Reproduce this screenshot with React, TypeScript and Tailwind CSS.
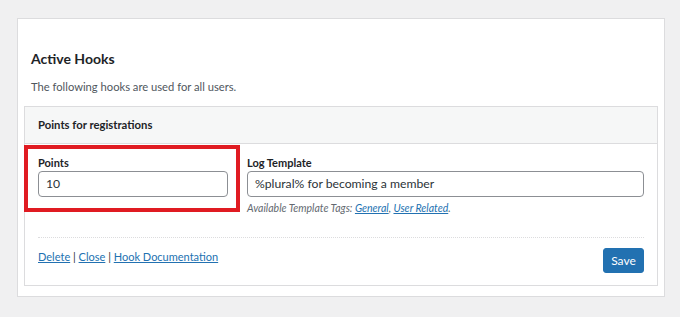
export default function App() {
  return (
    <div className="w-[680px] h-[317px] bg-[#f0f0f1] pt-[18px] pl-[17px] font-['Lato',sans-serif]">
      <div className="w-[648px] h-[279px] bg-white border border-[#dcdcde] pl-[6px] pr-[6px] pt-[28px]">
        <h2 className="ml-[7px] text-[14px] font-bold text-[#1d2327] leading-[24px]">Active Hooks</h2>
        <p className="ml-[7px] mt-[6px] text-[11.2px] text-[#50575e] leading-[20px]">The following hooks are used for all users.</p>
        <div className="mt-[9px] border border-[#dcdcde]">
          <div className="h-[37px] bg-[#f6f7f7] border-b border-[#dcdcde] pl-[13px] flex items-center">
            <span className="text-[11.3px] font-bold text-[#1d2327]">Points for registrations</span>
          </div>
          <div className="px-[13px] pt-[10px] pb-[12px]">
            <div className="relative flex gap-[19px]">
              <div className="w-[190px]">
                <label className="block text-[11px] font-bold text-[#1d2327] leading-[17px]">Points</label>
                <div className="h-[26px] border border-[#8c8f94] rounded-[4px] px-[7px] flex items-center text-[12.2px] text-[#2c3338]">10</div>
              </div>
              <div className="flex-1">
                <label className="block text-[11px] font-bold text-[#1d2327] leading-[17px]">Log Template</label>
                <div className="h-[26px] border border-[#8c8f94] rounded-[4px] px-[7px] flex items-center text-[12.2px] text-[#2c3338]">%plural% for becoming a member</div>
                <p className="mt-[3px] text-[10.5px] italic text-[#646970] leading-[16px]">
                  Available Template Tags: <a className="text-[#2271b1] underline">General</a>, <a className="text-[#2271b1] underline">User Related</a>.
                </p>
              </div>
              <div className="absolute left-[-14px] top-[-9px] w-[216px] h-[67px] border-[4px] border-[#e01b22]" />
            </div>
            <div className="mt-[21px] border-t border-dotted border-[#dcdcde]" />
            <div className="mt-[10px] flex items-start justify-between">
              <div className="mt-[0px] text-[11px] text-[#2c3338] leading-[18px]">
                <a className="text-[#2271b1] underline">Delete</a> | <a className="text-[#2271b1] underline">Close</a> | <a className="text-[#2271b1] underline">Hook Documentation</a>
              </div>
              <button className="w-[41px] h-[25px] bg-[#2271b1] border border-[#2271b1] rounded-[3px] text-white text-[12px]">Save</button>
            </div>
          </div>
        </div>
      </div>
    </div>
  );
}
